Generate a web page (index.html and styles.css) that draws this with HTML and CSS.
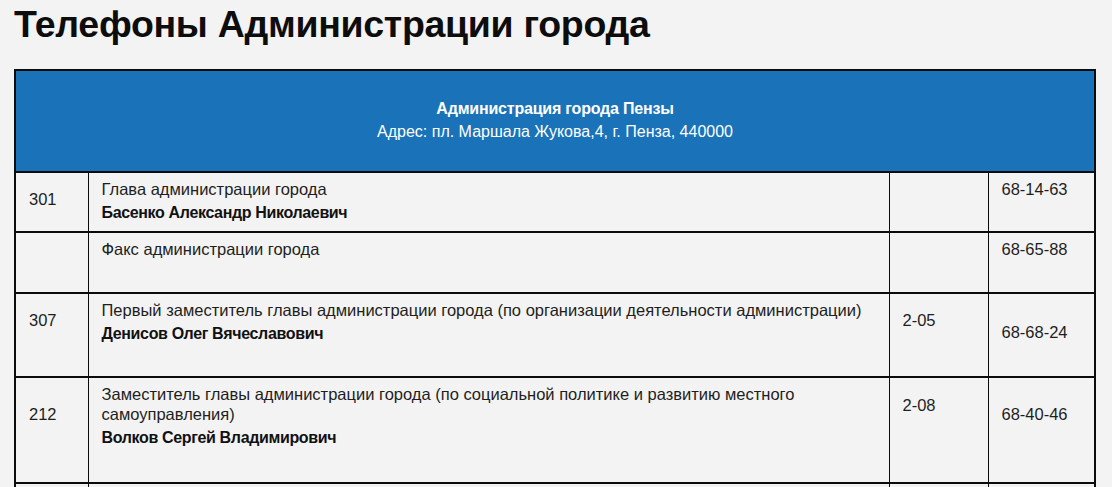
FILE: index.html
```html
<!DOCTYPE html>
<html lang="ru">
<head>
<meta charset="utf-8">
<title>Телефоны Администрации города</title>
<link rel="stylesheet" href="styles.css">
</head>
<body>
<h1 class="page-title">Телефоны Администрации города</h1>
<table class="phones">
  <colgroup>
    <col class="col-room">
    <col class="col-desc">
    <col class="col-ext">
    <col class="col-phone">
  </colgroup>
  <thead>
    <tr class="head-row">
      <th colspan="4" class="head-cell">
        <div class="head-title">Администрация города Пензы</div>
        <div class="head-addr">Адрес: пл. Маршала Жукова,4, г. Пенза, 440000</div>
      </th>
    </tr>
  </thead>
  <tbody>
    <tr class="row row-1">
      <td class="cell off-10">301</td>
      <td class="cell"><div class="desc">Глава администрации города</div><div class="name">Басенко Александр Николаевич</div></td>
      <td class="cell"></td>
      <td class="cell">68-14-63</td>
    </tr>
    <tr class="row row-2">
      <td class="cell"></td>
      <td class="cell"><div class="desc">Факс администрации города</div></td>
      <td class="cell"></td>
      <td class="cell">68-65-88</td>
    </tr>
    <tr class="row row-3">
      <td class="cell off-10">307</td>
      <td class="cell"><div class="desc">Первый заместитель главы администрации города (по организации деятельности администрации)</div><div class="name">Денисов Олег Вячеславович</div></td>
      <td class="cell off-10">2-05</td>
      <td class="cell off-22">68-68-24</td>
    </tr>
    <tr class="row row-4">
      <td class="cell off-20">212</td>
      <td class="cell"><div class="desc">Заместитель главы администрации города (по социальной политике и развитию местного самоуправления)</div><div class="name">Волков Сергей Владимирович</div></td>
      <td class="cell off-11">2-08</td>
      <td class="cell off-20">68-40-46</td>
    </tr>
    <tr class="row row-5">
      <td class="cell cell-stub"></td>
      <td class="cell cell-stub"></td>
      <td class="cell cell-stub"></td>
      <td class="cell cell-stub"></td>
    </tr>
  </tbody>
</table>
</body>
</html>
```

FILE: styles.css
```css
html, body {
  margin: 0;
  padding: 0;
  background: #f3f3f3;
}
html {
  height: 487px;
  overflow: hidden;
}
body {
  padding: 0 18px 0 14px;
  font-family: "Liberation Sans", Arial, sans-serif;
  color: #1e1e1e;
  overflow: hidden;
  height: 487px;
}
.page-title {
  margin: 0;
  padding-top: 1px;
  font-size: 37.5px;
  line-height: 46px;
  height: 68px;
  font-weight: bold;
  color: #0d0d0d;
  letter-spacing: -0.3px;
}
.phones {
  width: 1080px;
  border-collapse: collapse;
  table-layout: fixed;
  font-size: 16.5px;
  line-height: 20px;
}
.col-room { width: 73px; }
.col-desc { width: 801px; }
.col-ext { width: 99px; }
.col-phone { width: 107px; }
.head-cell {
  background: #1a73b8;
  color: #ffffff;
  height: 102px;
  padding: 0 0 2px;
  box-sizing: border-box;
  text-align: center;
  vertical-align: middle;
  border: 2px solid #0b0b0b;
  font-weight: normal;
}
.head-title {
  font-weight: bold;
  font-size: 16px;
  letter-spacing: -0.2px;
  line-height: 23px;
}
.head-addr {
  font-size: 16px;
  line-height: 23px;
}
.cell {
  vertical-align: top;
  padding: 6px 13px 0;
  border-top: 2px solid #0b0b0b;
  border-bottom: 2px solid #0b0b0b;
  border-left: 1px solid #0b0b0b;
  border-right: 1px solid #0b0b0b;
}
.cell:first-child { border-left-width: 2px; }
.cell:last-child { border-right-width: 2px; }
.cell-stub {
  padding: 0;
  border-bottom: 0;
}
.row-1 { height: 60px; }
.row-2 { height: 61px; }
.row-3 { height: 84px; }
.row-4 { height: 106px; }
.row-5 { height: 4px; }
.off-10 { padding-top: 16px; }
.off-11 { padding-top: 17px; }
.off-20 { padding-top: 26px; }
.off-22 { padding-top: 28px; }
.name {
  margin-top: 4px;
  font-size: 16px;
  letter-spacing: -0.35px;
  font-weight: bold;
  color: #111;
}
```
